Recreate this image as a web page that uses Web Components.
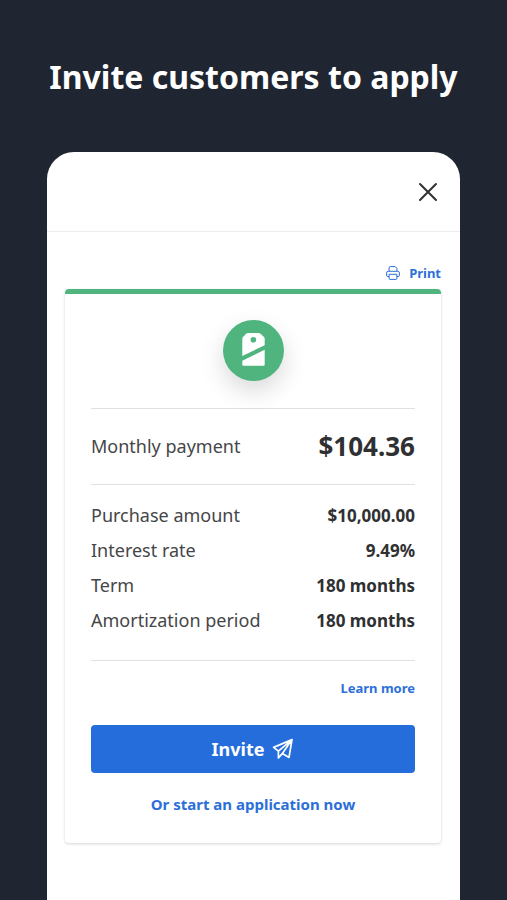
<!DOCTYPE html>
<html lang="en">
<head>
<meta charset="utf-8">
<meta name="viewport" content="width=device-width, initial-scale=1">
<title>Invite customers to apply</title>
<style>
  html, body { margin: 0; height: 100%; }
  body {
    --navy: #1f2631;
    --ink: #2f3032;
    --label: #454648;
    --blue: #256ddb;
    --link: #2c6fd8;
    --green: #50b47f;
    --line: #dfe1e2;
    background: var(--navy);
    color: var(--ink);
    font: 18px/24px "Noto Sans", sans-serif;
  }
</style>
</head>
<body>
<invite-page>
  <span slot="title">Invite customers to apply</span>
  <app-sheet>
    <print-link slot="tools">Print</print-link>
    <offer-card>
      <brand-badge slot="brand"></brand-badge>
      <detail-row slot="headline" size="large" label="Monthly payment">$104.36</detail-row>
      <detail-row slot="details" label="Purchase amount">$10,000.00</detail-row>
      <detail-row slot="details" label="Interest rate">9.49%</detail-row>
      <detail-row slot="details" label="Term">180 months</detail-row>
      <detail-row slot="details" label="Amortization period">180 months</detail-row>
      <text-link slot="more" size="small">Learn more</text-link>
      <invite-button slot="actions">Invite</invite-button>
      <text-link slot="actions">Or start an application now</text-link>
    </offer-card>
  </app-sheet>
</invite-page>

<script>
  const define = (name, render) => customElements.define(name, class extends HTMLElement {
    constructor() {
      super();
      this.attachShadow({ mode: "open" });
    }
    connectedCallback() {
      this.shadowRoot.innerHTML = render(this);
    }
  });

  define("invite-page", () => `
    <style>
      :host { display: flex; flex-direction: column; box-sizing: border-box; min-height: 100%; padding: 0 47px; }
      h1 { margin: 0; padding: 54px 0 52px; font-size: 32px; line-height: 46px; font-weight: 700; color: #fff; text-align: center; }
      main { flex: 1; display: flex; flex-direction: column; }
    </style>
    <h1><slot name="title"></slot></h1>
    <main><slot></slot></main>`);

  define("app-sheet", () => `
    <style>
      :host { display: flex; flex-direction: column; flex: 1; background: #fff; border-radius: 27px 27px 0 0; }
      header { display: flex; align-items: center; justify-content: flex-end; box-sizing: border-box; height: 80px; padding: 0 18px; border-bottom: 1px solid #ebecec; }
      button { display: flex; padding: 4px; border: 0; background: none; color: #303030; cursor: pointer; }
      .tools { display: flex; justify-content: flex-end; padding: 32px 19px 7px; }
      .content { padding: 0 19px 57px 18px; }
    </style>
    <header>
      <button type="button" aria-label="Close">
        <svg width="20" height="20" viewBox="0 0 20 20" fill="none" stroke="currentColor" stroke-width="2" stroke-linecap="round"><path d="M2 2 18 18M18 2 2 18"/></svg>
      </button>
    </header>
    <div class="tools"><slot name="tools"></slot></div>
    <div class="content"><slot></slot></div>`);

  define("print-link", () => `
    <style>
      a { display: flex; align-items: center; gap: 9px; font-size: 13px; line-height: 18px; font-weight: 700; color: var(--link); text-decoration: none; }
    </style>
    <a href="#print">
      <svg width="14" height="14" viewBox="0 0 14 14" fill="none" stroke="currentColor" stroke-width="1" stroke-linejoin="round">
        <path d="M3.1 5.3V1.8Q3.1.6 4.3.6H9.2L10.9 2.3V5.3"/>
        <path d="M3.1 10.5H1.8Q.6 10.5.6 9.2V7Q.6 5.3 2.3 5.3H11.7Q13.4 5.3 13.4 7V9.2Q13.4 10.5 12.2 10.5H10.9"/>
        <path d="M3.1 8.3H10.9V12.4Q10.9 13.4 9.9 13.4H4.1Q3.1 13.4 3.1 12.4Z"/>
      </svg>
      <slot></slot>
    </a>`);

  define("brand-badge", () => `
    <style>
      :host { display: block; width: 61px; height: 61px; border-radius: 50%; background: var(--green); box-shadow: 0 10px 24px rgba(0, 0, 0, .15); }
      svg { display: block; width: 100%; height: 100%; }
    </style>
    <svg viewBox="0 0 61 61" role="img" aria-label="Price tag">
      <path fill="#fff" fill-rule="evenodd" d="M19.3 36V18.7Q19.3 17.8 20 17.1L23.4 13.6Q24.1 13 25 13H35.6Q36.5 13 37.2 13.6L41 17.1Q41.7 17.8 41.7 18.7V25.2ZM30.4 16.9a2.8 2.8 0 1 0 0 5.6 2.8 2.8 0 0 0 0-5.6Z"/>
      <path fill="#fff" d="M41.7 29.8V44.5Q41.7 45.7 40.5 45.7H20.5Q19.3 45.7 19.3 44.5V40.8Z"/>
    </svg>`);

  define("detail-row", el => `
    <style>
      :host { display: flex; align-items: center; justify-content: space-between; gap: 12px; font-size: 18px; line-height: 35px; }
      .label { color: var(--label); }
      .value { font-size: 17px; font-weight: 700; }
      :host([size="large"]) .value { font-size: 26px; }
    </style>
    <span class="label">${el.getAttribute("label")}</span>
    <span class="value"><slot></slot></span>`);

  define("text-link", () => `
    <style>
      :host { display: block; text-align: center; font-size: 15px; line-height: 20px; }
      :host([size="small"]) { text-align: right; font-size: 13px; }
      a { color: var(--link); font-weight: 700; text-decoration: none; }
    </style>
    <a href="#apply"><slot></slot></a>`);

  define("invite-button", () => `
    <style>
      :host { display: block; }
      button { display: flex; align-items: center; justify-content: center; gap: 8px; width: 100%; height: 48px; padding: 0; border: 0; border-radius: 4px; background: var(--blue); color: #fff; font: inherit; font-weight: 700; cursor: pointer; }
    </style>
    <button type="button">
      <slot></slot>
      <svg width="22" height="22" viewBox="0 0 22 22" fill="none" stroke="currentColor" stroke-width="1.7" stroke-linejoin="round" stroke-linecap="round">
        <path d="M20 1.6 1.6 9.4 6.4 13.2 20 1.6 10.4 15.4 17 19.4 20 1.6M6.4 13.2V20L10.4 15.4"/>
      </svg>
    </button>`);

  define("offer-card", () => `
    <style>
      :host { display: block; border-radius: 4px; border-top: 5px solid var(--green); padding: 0 26px 29px; box-shadow: 0 1px 3px rgba(0, 0, 0, .17); }
      .brand { display: flex; justify-content: center; padding: 26px 0 27px; }
      section { border-top: 1px solid var(--line); }
      .headline { padding: 20px 0; }
      .details { padding: 13px 0 22px; }
      .more { padding: 17px 0 27px; }
      .actions { display: flex; flex-direction: column; gap: 21px; }
    </style>
    <div class="brand"><slot name="brand"></slot></div>
    <section class="headline"><slot name="headline"></slot></section>
    <section class="details"><slot name="details"></slot></section>
    <section class="more"><slot name="more"></slot></section>
    <div class="actions"><slot name="actions"></slot></div>`);
</script>
</body>
</html>
